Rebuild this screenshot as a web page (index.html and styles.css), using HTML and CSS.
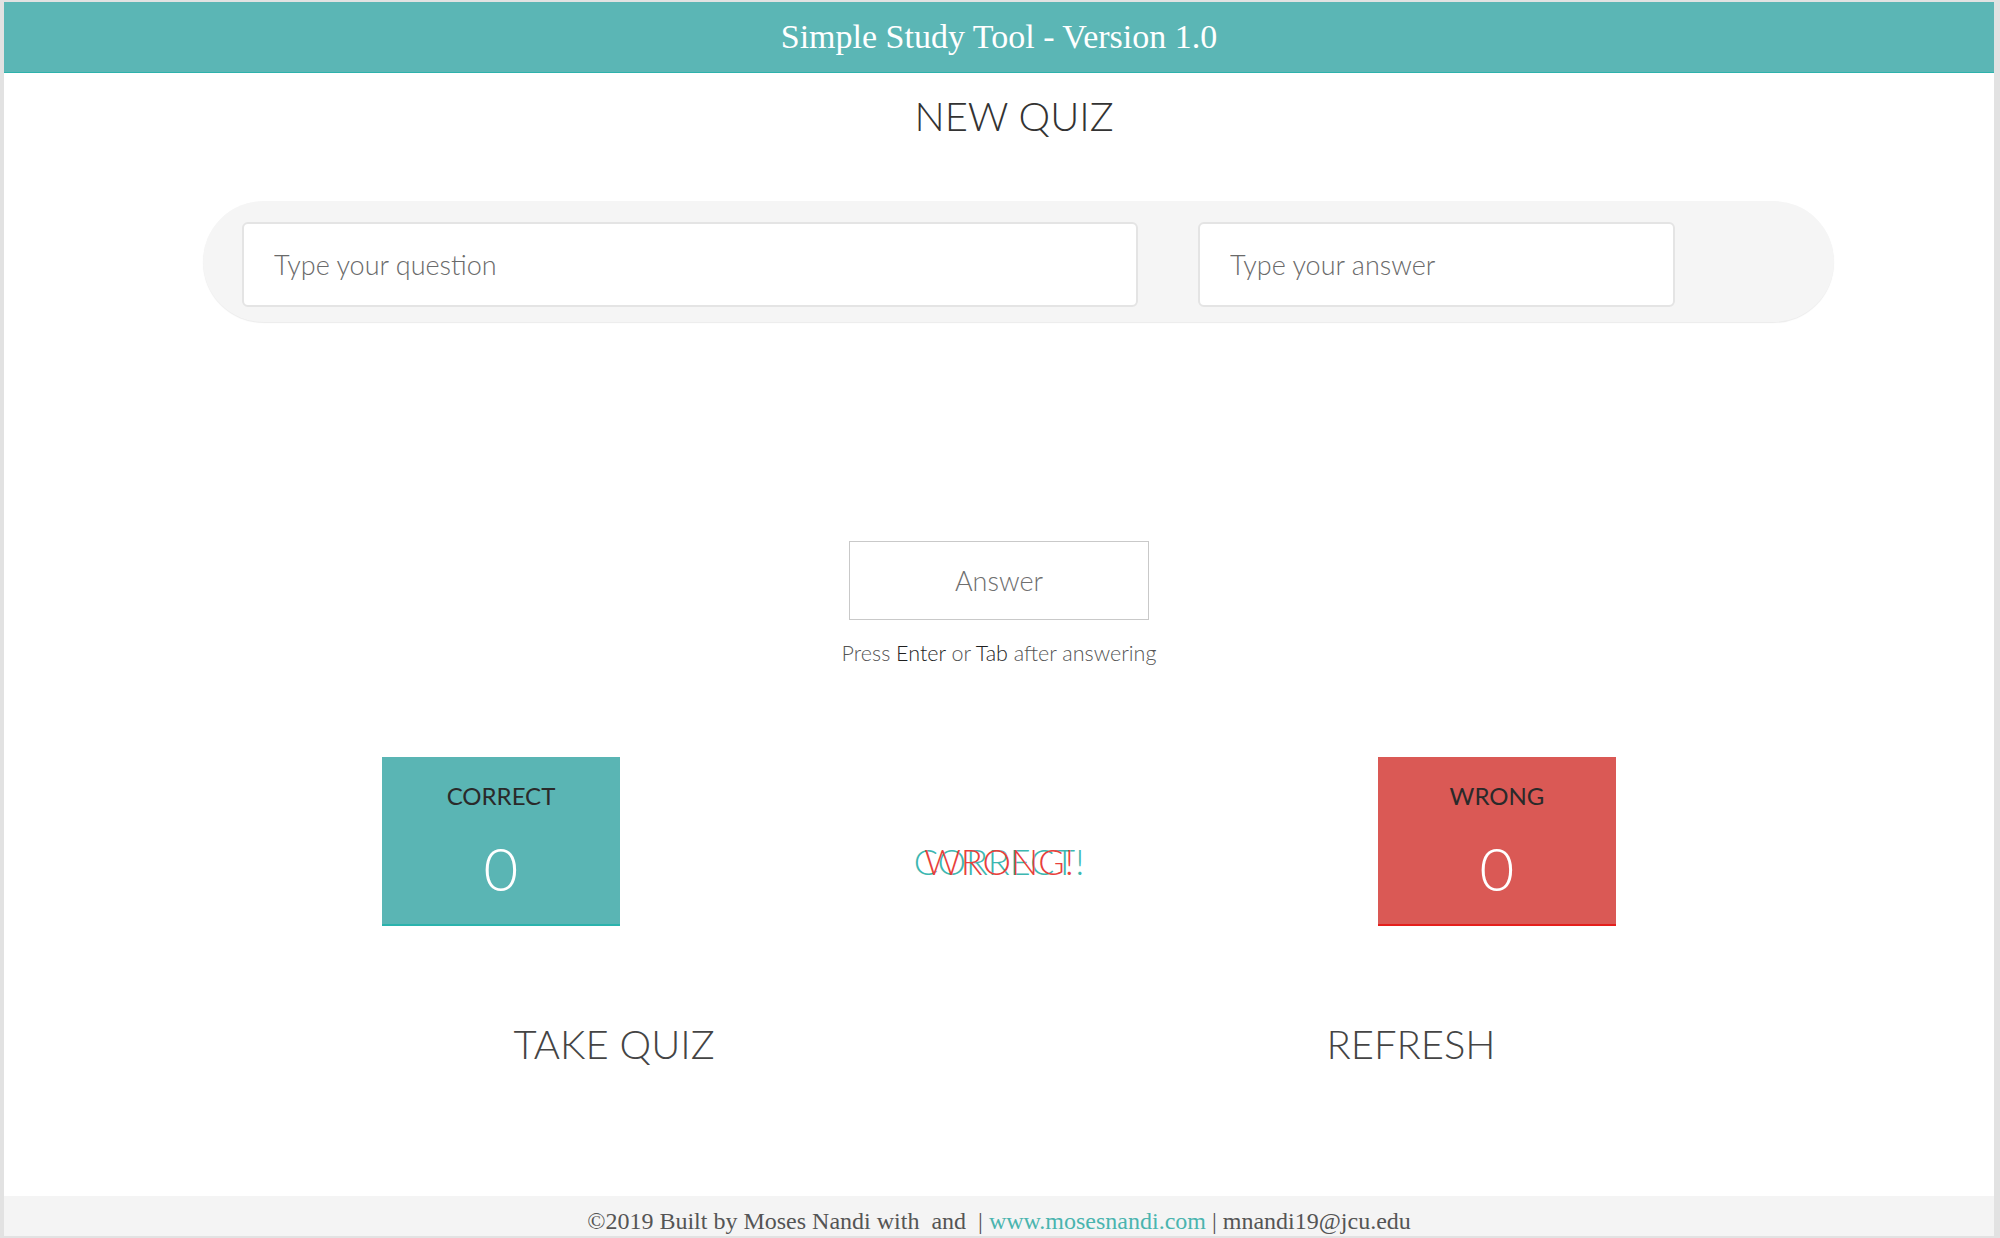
FILE: index.html
```html
<!DOCTYPE html>
<html lang="en">
<head>
<meta charset="utf-8">
<title>Simple Study Tool</title>
<link rel="stylesheet" href="styles.css">
</head>
<body>
  <header class="topbar">
    <h1 class="topbar-title">Simple Study Tool - Version 1.0</h1>
  </header>

  <main class="main">
    <h2 class="section-title">NEW QUIZ</h2>

    <form class="new-quiz">
      <input class="field field-question" type="text" placeholder="Type your question">
      <input class="field field-answer" type="text" placeholder="Type your answer">
    </form>

    <div class="quiz-answer">
      <input class="answer-box" type="text" placeholder="Answer">
      <p class="hint">Press <span class="key">Enter</span> or <span class="key">Tab</span> after answering</p>
    </div>

    <div class="scores">
      <div class="score score-correct">
        <div class="score-label">CORRECT</div>
        <div class="score-value">0</div>
      </div>
      <div class="feedback">
        <span class="feedback-correct">CORRECT!</span>
        <span class="feedback-wrong">WRONG!</span>
      </div>
      <div class="score score-wrong">
        <div class="score-label">WRONG</div>
        <div class="score-value">0</div>
      </div>
    </div>

    <div class="actions">
      <div class="action">TAKE QUIZ</div>
      <div class="action">REFRESH</div>
    </div>
  </main>

  <footer class="footer">©2019 Built by Moses Nandi with &nbsp;and &nbsp;| <a class="footer-link" href="#">www.mosesnandi.com</a> | mnandi19@jcu.edu</footer>
</body>
</html>
```

FILE: styles.css
```css
html {
  height: 100%;
  background: #e2e2e2;
}

body {
  margin: 2px 6px 2px 4px;
  height: calc(100% - 4px);
  background: #ffffff;
  display: flex;
  flex-direction: column;
  font-family: Lato, "Open Sans", sans-serif;
  color: #333;
}

.topbar {
  flex: none;
  height: 70px;
  background: #5bb6b5;
  border-bottom: 1.5px solid #2eb2ac;
  display: flex;
  align-items: center;
  justify-content: center;
}

.topbar-title {
  margin: 0;
  font-family: "Liberation Serif", "Times New Roman", serif;
  font-weight: normal;
  font-size: 34px;
  line-height: 70px;
  color: #ffffff;
}

.main {
  display: flex;
  flex-direction: column;
}

.section-title {
  margin: 19px 0 0 0;
  padding-left: 30px;
  text-align: center;
  font-weight: 300;
  font-size: 40px;
  line-height: 48px;
  color: #333;
}

.new-quiz {
  margin: 61px 160px 0 199px;
  padding: 21px 159px 15px 39px;
  background: #f5f5f5;
  border-radius: 61px;
  box-shadow: 0 1px 1px rgba(0, 0, 0, 0.08);
  display: flex;
  gap: 60px;
}

.field {
  box-sizing: border-box;
  height: 85px;
  padding: 0 30px;
  border: 2px solid #e4e4e4;
  border-radius: 6px;
  background: #ffffff;
  font-family: Lato, sans-serif;
  font-weight: 300;
  font-size: 27px;
  color: #444;
  outline: none;
}

.field::placeholder {
  color: #6a6a6a;
}

.field-question {
  width: 896px;
}

.field-answer {
  width: 477px;
}

.quiz-answer {
  margin-top: 219px;
  display: flex;
  flex-direction: column;
  align-items: center;
}

.answer-box {
  box-sizing: border-box;
  width: 300px;
  height: 79px;
  border: 1px solid #c9c9c9;
  border-radius: 0;
  background: #ffffff;
  text-align: center;
  font-family: Lato, sans-serif;
  font-weight: 300;
  font-size: 27px;
  color: #444;
  outline: none;
}

.answer-box::placeholder {
  color: #6f6f6f;
}

.hint {
  margin: 20px 0 0 0;
  font-weight: 300;
  font-size: 21.5px;
  line-height: 26px;
  color: #555;
}

.key {
  color: #1f1f1f;
}

.scores {
  margin: 91px auto 0 auto;
  width: 1234px;
  display: flex;
  justify-content: space-between;
  align-items: flex-start;
}

.score {
  box-sizing: border-box;
  width: 238px;
  height: 169px;
  padding-top: 24px;
  text-align: center;
}

.score-correct {
  background: #5ab5b4;
  border-bottom: 2px solid #2ab3ad;
}

.score-wrong {
  background: #da5955;
  border-bottom: 2px solid #e51f1c;
}

.score-label {
  font-size: 24px;
  line-height: 30px;
  color: #2a2a2a;
}

.score-value {
  margin-top: 21px;
  font-weight: 300;
  font-size: 60px;
  line-height: 72px;
  color: #ffffff;
}

.feedback {
  display: grid;
  justify-items: center;
  margin-top: 83px;
  font-weight: 300;
  font-size: 36px;
  line-height: 42px;
}

.feedback-correct,
.feedback-wrong {
  grid-row: 1;
  grid-column: 1;
}

.feedback-correct {
  color: #3db7b1;
}

.feedback-wrong {
  color: #e8403b;
}

.actions {
  margin-top: 94px;
  padding-left: 27px;
  display: grid;
  grid-template-columns: 400px 400px;
  column-gap: 397px;
  justify-content: center;
}

.action {
  text-align: center;
  font-weight: 300;
  font-size: 40px;
  line-height: 48px;
  color: #444;
}

.footer {
  flex: none;
  margin-top: auto;
  height: 40px;
  overflow: hidden;
  background: #f4f4f4;
  text-align: center;
  font-family: "Liberation Serif", "Times New Roman", serif;
  font-size: 24px;
  line-height: 50px;
  color: #555;
  white-space: nowrap;
}

.footer-link {
  color: #4ab4af;
  text-decoration: none;
}
```
